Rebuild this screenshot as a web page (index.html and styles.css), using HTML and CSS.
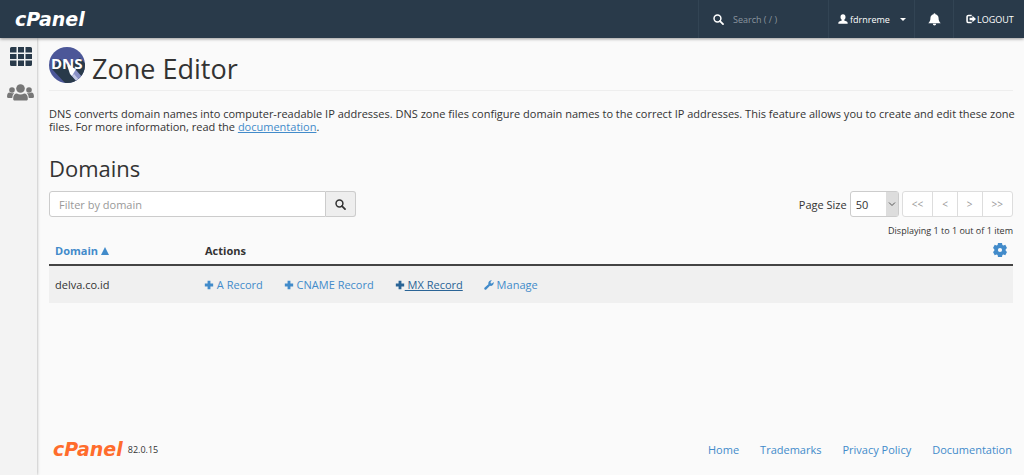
FILE: index.html
```html
<!DOCTYPE html>
<html lang="en">
<head>
<meta charset="utf-8">
<title>cPanel - Zone Editor</title>
<link rel="stylesheet" href="styles.css">
</head>
<body>
<svg class="defs" aria-hidden="true">
  <symbol id="search" viewBox="0 0 16 16"><circle cx="6.5" cy="6.5" r="5" fill="none" stroke="currentColor" stroke-width="2.2"/><path d="M10.200 10.200L14.600 14.600" stroke="currentColor" stroke-width="2.600" stroke-linecap="round"/></symbol>
  <symbol id="plus" viewBox="0 0 12 12"><path d="M4.300 1h3.400v3.300H11v3.400H7.700V11H4.300V7.700H1V4.300h3.300z" fill="currentColor"/></symbol>
  <symbol id="person" viewBox="0 0 16 16"><path d="M8 0.500c2.500 0 4 1.700 4 4.300 0 2-.8 3.600-2 4.500v1.200l4 1.600c1 .4 1.500 1.200 1.500 3.400H.5c0-2.200.5-3 1.500-3.400l4-1.600V9.300C4.800 8.400 4 6.800 4 4.800 4 2.200 5.500.5 8 .5z" fill="currentColor"/></symbol>
</svg>
<header class="topbar">
  <a class="logo" href="#">cPanel</a>
  <form class="topbar-item topbar-search">
    <svg class="icon"><use href="#search"/></svg>
    <input type="text" placeholder="Search ( / )" aria-label="Search">
  </form>
  <button class="topbar-item account" type="button">
    <svg class="icon person"><use href="#person"/></svg>fdrnreme<span class="caret"></span>
  </button>
  <button class="topbar-item bell" type="button" aria-label="Notifications">
    <svg class="icon" viewBox="0 0 14 14"><path d="M7 0.300c.7 0 1 .4 1 1 2.200.5 3.400 2 3.400 4.400 0 2.600.8 3.800 2.300 5.300H.3c1.500-1.500 2.300-2.700 2.300-5.300C2.600 3.300 3.800 1.800 6 1.300c0-.6.300-1 1-1zM5.200 11.600h3.600a1.800 1.800 0 0 1-3.600 0z" fill="currentColor"/></svg>
  </button>
  <a class="topbar-item logout" href="#"><svg class="icon logout-icon" viewBox="0 0 14 14"><path d="M8 2H3.500A2 2 0 0 0 1.500 4v6a2 2 0 0 0 2 2H8" fill="none" stroke="currentColor" stroke-width="2.200"/><path d="M5 5.300h4V2.500L14 7l-5 4.500V8.700H5z" fill="currentColor"/></svg>LOGOUT</a>
</header>
<div class="shell">
  <nav class="sidebar" aria-label="Main">
    <a href="#" aria-label="Home"><svg class="grid-icon" viewBox="0 0 22 19"><path d="M1.500 0H6.500v5.500H0v-4Q0 0 1.500 0zM8 0h6v5.500H8zM15.500 0h5Q22 0 22 1.500v4h-6.500zM0 7h6.500v5H0zM8 7h6v5H8zM15.500 7H22v5h-6.500zM0 13.500h6.500V19h-5Q0 19 0 17.500zM8 13.500h6V19H8zM15.500 13.500H22v4q0 1.500-1.500 1.500h-5z" fill="#293a4a"/></svg></a>
    <a href="#" aria-label="User Manager"><svg class="users-icon" viewBox="0 0 27 17"><g fill="#777"><circle cx="13.500" cy="4.500" r="4.300"/><circle cx="5" cy="6" r="2.800"/><circle cx="22" cy="6" r="2.800"/><path d="M7 16.500q-1-.5-.8-2.500.4-4.500 3.600-4.500 3.700 1.800 7.400 0 3.200 0 3.600 4.500.2 2-.8 2.500zM1.500 14Q0 14 0 12.500.2 8.800 2.500 8.600q2.500 1.200 4.700.3Q5.300 10.500 5.200 14zM25.500 14q1.500 0 1.500-1.500-.2-3.700-2.500-3.900-2.500 1.200-4.700.3 1.900 1.600 2 5.100z"/></g></svg></a>
  </nav>
  <div class="page">
    <main>
      <h1>
        <svg class="dns-icon" viewBox="0 0 36 36" aria-hidden="true">
          <clipPath id="disc"><circle cx="18" cy="18" r="18"/></clipPath>
          <g clip-path="url(#disc)">
            <path d="M0 0h36v36H0z" fill="#4c5798"/>
            <path d="M3 22l8-10 7 6 13-7 5 5v20H16z" fill="#293a4a"/>
            <text class="dns-text" x="2" y="22">DNS</text>
            <path d="M20 21l7 2 7 8-5 5-7-8z" fill="#8a91c6"/>
            <path d="M18 18l9 4-4 7-2-2z" fill="#fff"/>
            <path d="M23 29l6 7 2-2-6-7z" fill="#c3c8e4"/>
          </g>
        </svg>
        Zone Editor
      </h1>
      <p class="intro">DNS converts domain names into computer-readable IP addresses. DNS zone files configure domain names to the correct IP addresses. This feature allows you to create and edit these zone files. For more information, read the <a href="#">documentation</a>.</p>
      <h2>Domains</h2>
      <div class="toolbar">
        <form class="filter">
          <input type="text" placeholder="Filter by domain" aria-label="Filter by domain">
          <button type="button" aria-label="Search"><svg class="icon"><use href="#search"/></svg></button>
        </form>
        <div class="paging">
          <label for="size">Page Size</label>
          <span class="select-wrap"><select id="size"><option>50</option></select><svg class="select-arrow" viewBox="0 0 12 24"><path d="M3 10.500L6 13.500l3-3" fill="none" stroke="#555"/></svg></span>
          <div class="pager">
            <button type="button" disabled>&lt;&lt;</button><button type="button" disabled>&lt;</button><button type="button" disabled>&gt;</button><button type="button" disabled>&gt;&gt;</button>
          </div>
        </div>
      </div>
      <p class="count">Displaying 1 to 1 out of 1 item</p>
      <table>
        <thead>
          <tr>
            <th class="domain-col"><a href="#">Domain <svg class="sort" viewBox="0 0 8 8"><path d="M4 0l4 8H0z" fill="currentColor"/></svg></a></th>
            <th>Actions</th>
            <th class="gear-col"><button class="gear" type="button" aria-label="Table settings"><svg viewBox="0 0 14 14"><path fill="currentColor" fill-rule="evenodd" d="M5 0h4l.4 1.900 1 .5 1.900-.7 1.700 3.200-1.300 1.300v1.600L14 9.100l-1.700 3.200-1.900-.7-1 .5L9 14H5l-.4-1.900-1-.5-1.900.7L0 9.100l1.300-1.300V6.200L0 4.900l1.700-3.200 1.900.7 1-.5zM7 4.900a2.100 2.100 0 1 0 0 4.200 2.100 2.100 0 0 0 0-4.200z"/></svg></button></th>
          </tr>
        </thead>
        <tbody>
          <tr>
            <td>delva.co.id</td>
            <td colspan="2"><div class="actions">
              <a href="#"><svg class="plus"><use href="#plus"/></svg> A Record</a>
              <a href="#"><svg class="plus"><use href="#plus"/></svg> CNAME Record</a>
              <a class="hovered" href="#"><svg class="plus"><use href="#plus"/></svg> MX Record</a>
              <a href="#"><svg class="plus" viewBox="0 0 12 12"><path d="M.6 9.300L5.300 5C4.700 2.500 6.500.1 9.500.4L7.800 2.500l.3 1.400 1.400.3 2.100-1.700c.5 3.300-1.900 5.100-4.500 4.500L2.700 11.400C1.500 12.200-.5 10.500.6 9.300z" fill="currentColor"/></svg> Manage</a>
            </div></td>
          </tr>
        </tbody>
      </table>
    </main>
    <footer>
      <a class="logo footer-logo" href="#">cPanel</a>
      <span class="version">82.0.15</span>
      <nav class="links" aria-label="Footer"><a href="#">Home</a><a href="#">Trademarks</a><a href="#">Privacy Policy</a><a href="#">Documentation</a></nav>
    </footer>
  </div>
</div>
</body>
</html>
```
FILE: styles.css
```css
* { box-sizing: border-box; }
body {
  margin: 0;
  min-height: 100vh;
  display: flex;
  flex-direction: column;
  background: #fafafa;
  color: #333;
  font: 11px/13px "Open Sans", sans-serif;
}
button, input, select { font: inherit; color: inherit; }
a { color: #428bca; text-decoration: none; }
h1, h2, p { margin: 0; font-weight: 400; }
.defs { position: absolute; width: 0; height: 0; }
.icon { width: 11px; height: 11px; flex: none; }

.topbar {
  position: relative;
  display: flex;
  height: 38px;
  background: #293a4a;
  color: #fff;
  font-size: 9px;
  box-shadow: 0 1px 3px rgba(0, 0, 0, .4);
}
.logo {
  color: #fff;
  font: italic bold 19px/38px "DejaVu Sans", sans-serif;
}
.topbar .logo { margin: 0 auto 0 15px; }
.topbar-item {
  display: flex;
  align-items: center;
  border: 0;
  border-left: 1px solid #324454;
  background: none;
  color: #fff;
  padding: 0;
}
.topbar-search { width: 130px; padding-left: 14px; gap: 9px; }
.topbar-search input {
  width: 80px;
  padding: 0;
  border: 0;
  background: none;
}
.topbar-search input::placeholder { color: #8b959e; opacity: 1; }
.account { width: 86px; padding-left: 9px; gap: 2px; }
.person { width: 10px; height: 10px; }
.caret {
  margin-left: 8px;
  border: 3px solid transparent;
  border-top-color: #fff;
  border-bottom: 0;
}
.bell { width: 39px; justify-content: center; }
.bell .icon { width: 13px; height: 13px; }
.logout { width: 71px; padding-left: 12px; gap: 1px; }
.logout-icon { width: 10px; height: 10px; }

.shell { display: flex; flex: 1; }
.sidebar {
  width: 37px;
  flex: none;
  display: flex;
  flex-direction: column;
  align-items: flex-end;
  gap: 18px;
  padding: 9px 3px;
  background: #f3f3f3;
  box-shadow: 0 0 3px rgba(0, 0, 0, .35);
}
.sidebar a { display: flex; }
.grid-icon { width: 22px; height: 19px; margin-right: 2px; }
.users-icon { width: 27px; height: 17px; }
.page {
  flex: 1;
  display: flex;
  flex-direction: column;
  justify-content: space-between;
  padding: 9px 11px 0 12px;
}
h1 {
  display: flex;
  align-items: flex-start;
  gap: 7px;
  border-bottom: 1px solid #eee;
  font-size: 27px;
  line-height: 43px;
}
.dns-icon { width: 36px; height: 36px; }
.dns-text { fill: #fff; font: bold 15px "Open Sans", sans-serif; }
.intro { margin-right: -6px; padding-top: 16px; }
.intro a { text-decoration: underline; }
h2 { padding: 20px 0 8px; font-size: 22px; line-height: 30px; }
.toolbar { display: flex; justify-content: space-between; }
.filter { display: flex; width: 307px; height: 26px; }
.filter input {
  flex: 1;
  min-width: 0;
  padding: 0 9px;
  border: 1px solid #ccc;
  border-radius: 3px 0 0 3px;
  background: #fff;
}
.filter input::placeholder { color: #999; opacity: 1; }
.filter button {
  width: 30px;
  display: flex;
  align-items: center;
  justify-content: center;
  padding: 0;
  border: 1px solid #ccc;
  border-left: 0;
  border-radius: 0 3px 3px 0;
  background: #eee;
}
.paging { display: flex; align-items: center; gap: 3px; }
.select-wrap { position: relative; display: flex; height: 26px; }
.select-wrap select {
  appearance: none;
  width: 49px;
  padding: 0 5px;
  border: 1px solid #ccc;
  border-radius: 3px;
  background: #fff;
}
.select-arrow {
  position: absolute;
  right: 1px;
  top: 1px;
  width: 12px;
  height: 24px;
  background: #ddd;
  pointer-events: none;
}
.pager { display: flex; height: 26px; border: 1px solid #ddd; border-radius: 3px; background: #fff; }
.pager button { padding: 0 9px; border: 0; background: none; color: #999; font-size: 10px; }
.pager button + button { border-left: 1px solid #ddd; }
.count { padding-top: 7px; text-align: right; font-size: 9px; }
table { width: 100%; border-collapse: collapse; }
th { height: 28px; padding: 0 6px; text-align: left; border-bottom: 2px solid #444; }
.domain-col { width: 150px; }
.sort { width: 8px; height: 8px; }
.gear-col { width: 40px; text-align: right; }
.gear { padding: 0; border: 0; background: none; color: #428bca; }
.gear svg { display: block; width: 14px; height: 14px; }
td { height: 38px; padding: 0 5px; background: #f0f0f0; }
td:first-child { padding-left: 6px; }
.actions { display: flex; gap: 21px; }
.plus { width: 10px; height: 10px; vertical-align: -1px; }
.hovered { color: #2a6496; text-decoration: underline; }

footer { display: flex; align-items: center; padding: 0 1px 7px 4px; }
.footer-logo { color: #ff6c2c; }
.version { margin-left: 5px; font-size: 9px; }
.links { display: flex; gap: 21px; margin-left: auto; }
```
